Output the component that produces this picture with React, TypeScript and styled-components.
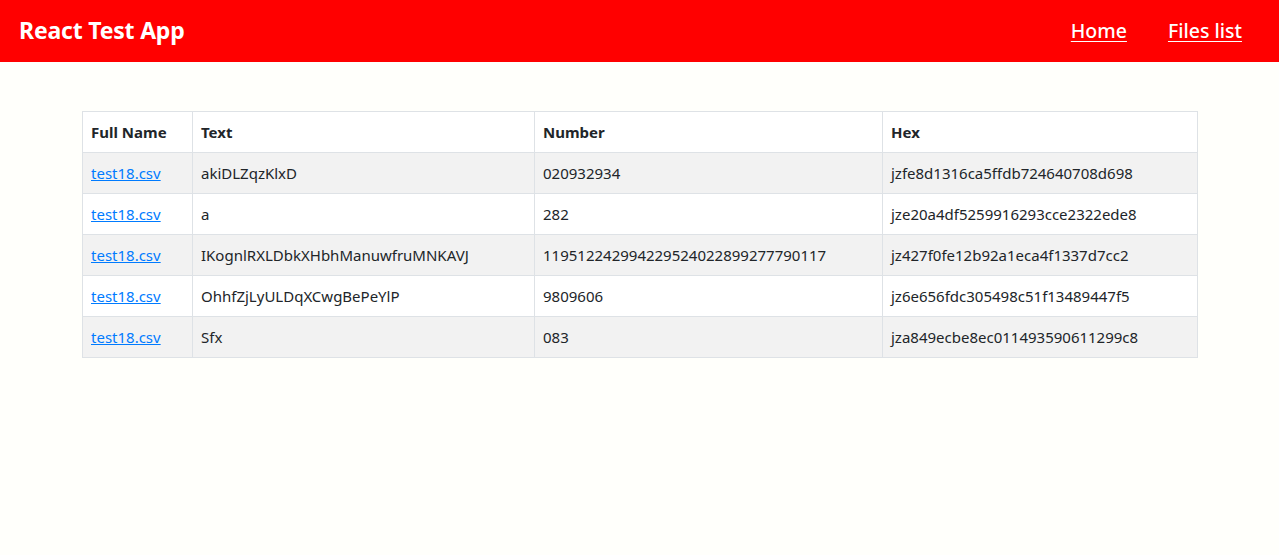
import React from "react";
import styled, { createGlobalStyle } from "styled-components";

const Global = createGlobalStyle`
  html, body { margin: 0; padding: 0; }
  body {
    background: #fffffb;
    font-family: "Segoe UI", "Noto Sans", "Open Sans", sans-serif;
    color: #212529;
  }
`;

const Header = styled.header`
  height: 62px;
  background: #ff0000;
  display: flex;
  align-items: center;
  justify-content: space-between;
  padding: 0 37px 2px 19px;
  box-sizing: border-box;
`;

const Title = styled.h1`
  margin: 0;
  color: #fff;
  font-size: 23px;
  font-weight: 700;
  letter-spacing: -0.2px;
`;

const Nav = styled.nav`
  display: flex;
  gap: 41px;
`;

const NavLink = styled.a`
  color: #fff;
  font-size: 19.5px;
  font-weight: 500;
  text-decoration: underline;
  text-underline-offset: 3px;
`;

const Main = styled.main`
  padding: 49px 0 0 82px;
  display: flex;
`;

const Table = styled.table`
  width: 1115px;
  table-layout: fixed;
  border-collapse: collapse;
  font-size: 15px;
  line-height: 24px;
`;

const Th = styled.th<{ $w: number }>`
  width: ${(p) => p.$w}px;
  text-align: left;
  font-weight: 700;
  padding: 8px;
  border: 1px solid #dee2e6;
  white-space: nowrap;
`;

const Row = styled.tr<{ $striped: boolean }>`
  background: ${(p) => (p.$striped ? "#f2f2f2" : "#ffffff")};
`;

const HeadRow = styled.tr`
  background: #ffffff;
`;

const Td = styled.td`
  padding: 8px;
  border: 1px solid #dee2e6;
  white-space: nowrap;
`;

const FileLink = styled.a`
  color: #007bff;
  text-decoration: underline;
`;

const rows = [
  ["akiDLZqzKlxD", "020932934", "jzfe8d1316ca5ffdb724640708d698"],
  ["a", "282", "jze20a4df5259916293cce2322ede8"],
  ["IKognlRXLDbkXHbhManuwfruMNKAVJ", "119512242994229524022899277790117", "jz427f0fe12b92a1eca4f1337d7cc2"],
  ["OhhfZjLyULDqXCwgBePeYlP", "9809606", "jz6e656fdc305498c51f13489447f5"],
  ["Sfx", "083", "jza849ecbe8ec011493590611299c8"],
];

export default function App() {
  return (
    <>
      <Global />
      <Header>
        <Title>React Test App</Title>
        <Nav>
          <NavLink href="#">Home</NavLink>
          <NavLink href="#">Files list</NavLink>
        </Nav>
      </Header>
      <Main>
        <Table>
          <thead>
            <HeadRow>
              <Th $w={93}>Full Name</Th>
              <Th $w={325}>Text</Th>
              <Th $w={331}>Number</Th>
              <Th $w={298}>Hex</Th>
            </HeadRow>
          </thead>
          <tbody>
            {rows.map((r, i) => (
              <Row key={i} $striped={i % 2 === 0}>
                <Td>
                  <FileLink href="#">test18.csv</FileLink>
                </Td>
                <Td>{r[0]}</Td>
                <Td>{r[1]}</Td>
                <Td>{r[2]}</Td>
              </Row>
            ))}
          </tbody>
        </Table>
      </Main>
    </>
  );
}
